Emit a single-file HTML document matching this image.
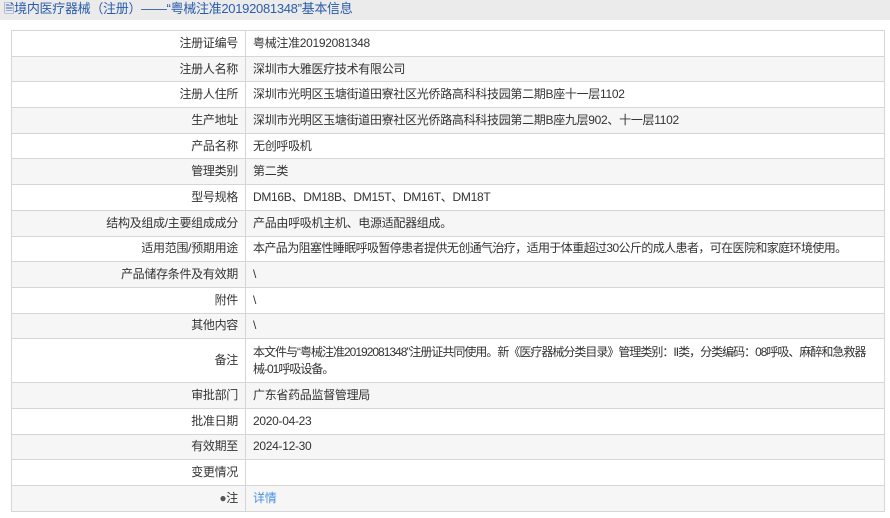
<!DOCTYPE html>
<html><head><meta charset="utf-8"><style>
body{margin:0;width:890px;height:518px;background:#fff;font-family:"Liberation Sans","Noto Sans CJK SC",sans-serif;font-size:12px;color:#333;overflow:hidden}
.hd{height:20px;background:#ebebeb;color:#2a5caa;font-size:13px;line-height:18px;padding-left:4px;letter-spacing:-0.3px}
table{position:absolute;left:11px;top:30px;width:874px;border-collapse:collapse;table-layout:fixed}
td{border:1px solid #d6d6d6;height:24.7px;padding:0 7px;line-height:17px;letter-spacing:-0.3px;overflow:hidden;white-space:nowrap}
td.l{width:219px;text-align:right;}
tr:nth-child(even) td{background:#f6f6f6}
a{color:#4a90e2;text-decoration:none}
.nw{letter-spacing:-0.6px}
.bz{letter-spacing:-1px;padding-right:0}
</style></head><body>
<div class="hd">🗎境内医疗器械（注册）——“粤械注准20192081348”基本信息</div>
<table>
<tr><td class="l">注册证编号</td><td>粤械注准20192081348</td></tr>
<tr><td class="l">注册人名称</td><td>深圳市大雅医疗技术有限公司</td></tr>
<tr><td class="l">注册人住所</td><td>深圳市光明区玉塘街道田寮社区光侨路高科科技园第二期B座十一层1102</td></tr>
<tr><td class="l">生产地址</td><td>深圳市光明区玉塘街道田寮社区光侨路高科科技园第二期B座九层902、十一层1102</td></tr>
<tr><td class="l">产品名称</td><td>无创呼吸机</td></tr>
<tr><td class="l">管理类别</td><td>第二类</td></tr>
<tr><td class="l">型号规格</td><td>DM16B、DM18B、DM15T、DM16T、DM18T</td></tr>
<tr><td class="l">结构及组成/主要组成成分</td><td>产品由呼吸机主机、电源适配器组成。</td></tr>
<tr><td class="l">适用范围/预期用途</td><td class="nw">本产品为阻塞性睡眠呼吸暂停患者提供无创通气治疗，适用于体重超过30公斤的成人患者，可在医院和家庭环境使用。</td></tr>
<tr><td class="l">产品储存条件及有效期</td><td>\</td></tr>
<tr><td class="l">附件</td><td>\</td></tr>
<tr><td class="l">其他内容</td><td>\</td></tr>
<tr><td class="l" style="height:43px">备注</td><td class="bz">本文件与“粤械注准20192081348”注册证共同使用。新《医疗器械分类目录》管理类别：II类，分类编码：08呼吸、麻醉和急救器<br>械-01呼吸设备。</td></tr>
<tr><td class="l">审批部门</td><td>广东省药品监督管理局</td></tr>
<tr><td class="l">批准日期</td><td>2020-04-23</td></tr>
<tr><td class="l">有效期至</td><td>2024-12-30</td></tr>
<tr><td class="l">变更情况</td><td></td></tr>
<tr><td class="l"><span style="color:#555">●</span>注</td><td><a>详情</a></td></tr>
</table>
</body></html>
